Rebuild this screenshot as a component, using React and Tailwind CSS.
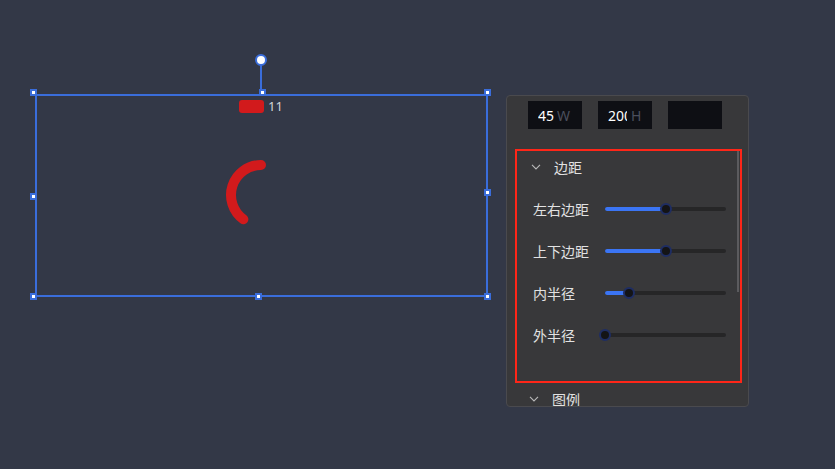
import React from "react";

const HANDLES = [
  [33, 92], [262, 92], [487, 92],
  [33, 196], [487, 192],
  [33, 296], [258, 296], [487, 296],
];

const SLIDERS = [
  { label: "左右边距", value: 50 },
  { label: "上下边距", value: 50 },
  { label: "内半径", value: 20 },
  { label: "外半径", value: 0 },
];

function Chevron() {
  return (
    <svg width="10" height="6" viewBox="0 0 10 6" className="shrink-0">
      <polyline points="1,0.8 5,5 9,0.8" fill="none" stroke="#b8b8b8" strokeWidth="1.1" />
    </svg>
  );
}

function Slider({ value }) {
  return (
    <div className="relative h-[12px] w-[121px] flex items-center">
      <div className="h-[4px] w-full rounded-full bg-[#262627]">
        <div className="h-full rounded-full bg-[#3b75f4]" style={{ width: `${value}%` }} />
      </div>
      <div
        className="absolute top-0 h-[12px] w-[12px] -ml-[6px] rounded-full bg-[#141416] border-2 border-[#1e2d63]"
        style={{ left: `${value}%` }}
      />
    </div>
  );
}

function SizeInput({ value, suffix, numW, gap = 3 }) {
  return (
    <div className="h-[28px] w-[54px] bg-[#0e0f14] flex items-center pl-[10px] text-[14px] overflow-hidden">
      {value && (
        <>
          <span className="overflow-hidden whitespace-nowrap text-white shrink-0" style={{ width: numW }}>{value}</span>
          <span className="text-[#4a4e5c]" style={{ marginLeft: gap }}>{suffix}</span>
        </>
      )}
    </div>
  );
}

export default function App() {
  return (
    <div
      className="relative w-[835px] h-[469px] overflow-hidden bg-[#333847]"
      style={{ fontFamily: '"Noto Sans", "Noto Sans CJK SC", sans-serif' }}
    >
      {/* chart selection box on the canvas */}
      <div className="absolute left-[35px] top-[94px] w-[453px] h-[203px] border-2 border-[#3a6ddb]" />
      <div className="absolute left-[260px] top-[64px] w-[2px] h-[28px] bg-[#3a6ddb]" />
      <div className="absolute left-[255px] top-[54px] w-[12px] h-[12px] rounded-full bg-white border-2 border-[#3a6ddb]" />
      {HANDLES.map(([x, y], i) => (
        <div
          key={i}
          className="absolute w-[7px] h-[7px] bg-white border-2 border-[#3a6ddb]"
          style={{ left: x - 3.5, top: y - 3.5 }}
        />
      ))}

      {/* chart content */}
      <div className="absolute left-[239px] top-[100px] flex items-center gap-[4px]">
        <div className="w-[25px] h-[13px] rounded-[3px] bg-[#d21a1c]" />
        <span className="text-[13px] leading-none text-[#d4d4d8]">11</span>
      </div>
      <svg className="absolute left-0 top-0" width="835" height="469">
        <path
          d="M 261 165 A 30 30 0 0 0 243.37 219.27"
          fill="none"
          stroke="#d21a1c"
          strokeWidth="10"
          strokeLinecap="round"
        />
      </svg>

      {/* properties panel */}
      <div className="absolute left-[506px] top-[95px] w-[243px] h-[312px] rounded-[4px] border border-[#4a4a4e] bg-[#38383a] overflow-hidden">
        <div className="flex gap-[16px] pl-[21px] pt-[5px]">
          <SizeInput value="45" suffix="W" numW={16} />
          <SizeInput value="200" suffix="H" numW={19} gap={4} />
          <SizeInput />
        </div>

        <div className="relative mt-[20px] ml-[8px] w-[227px] h-[234px] border-2 border-[#ff2618]">
          <div className="absolute right-[1px] top-0 w-[2px] h-[141px] bg-[#5b5b5e]" />
          <div className="h-[32px] flex items-center pl-[14px] gap-[13px] text-[14px] text-[#e2e2e2]">
            <Chevron />
            <span>边距</span>
          </div>
          <div className="mt-[5px] flex flex-col">
            {SLIDERS.map((s) => (
              <div key={s.label} className="h-[42px] flex items-center pl-[16px]">
                <span className="w-[72px] text-[14px] text-[#e2e2e2]">{s.label}</span>
                <Slider value={s.value} />
              </div>
            ))}
          </div>
        </div>

        <div className="h-[32px] flex items-center pl-[22px] gap-[13px] text-[14px] text-[#e2e2e2]">
          <Chevron />
          <span>图例</span>
        </div>
      </div>
    </div>
  );
}
